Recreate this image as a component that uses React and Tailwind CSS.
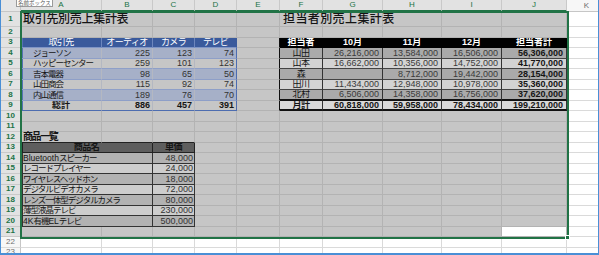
import React from "react";

const COLS = ["A", "B", "C", "D", "E", "F", "G", "H", "I", "J", "K"];
const WIDTH = {
  A: "w-[81px]",
  B: "w-[51px]",
  C: "w-[42px]",
  D: "w-[42px]",
  E: "w-[43px]",
  F: "w-[43px]",
  G: "w-[60px]",
  H: "w-[59px]",
  I: "w-[60px]",
  J: "w-[65px]",
  K: "w-[40px]",
};
const ROWS = Array.from({ length: 23 }, (_, i) => i + 1);

const sheet = {};
const put = (ref, cell) => {
  sheet[ref] = { ...sheet[ref], ...cell };
};

// titles
put("A1", { t: "取引先別売上集計表", title: true, x: "text-[12px] font-medium pl-[2px]", jp: "tracking-[-0.3px]" });
put("F1", { t: "担当者別売上集計表", title: true, x: "text-[12px] font-medium pl-[3px]", jp: "tracking-[0.4px]" });
put("A12", { t: "商品一覧", title: true, x: "text-[10px] font-bold pl-[2px]", jp: "tracking-[-1.4px]", c: "bg-[#c6c6c6] border-r-[#b3b3b3] border-b-[#222]" });
put("B12", { c: "bg-[#c6c6c6] border-r-[#b3b3b3] border-b-[#222]" });
put("C12", { c: "bg-[#c6c6c6] border-r-[#b3b3b3] border-b-[#222]" });

// 取引先別
const t1Head = ["取引先", "オーディオ", "カメラ", "テレビ"];
const T1 = ["A", "B", "C", "D"];
T1.forEach((col, i) =>
  put(col + "3", {
    t: t1Head[i],
    c: `bg-[#3a5a9c] border-b-[#7f95c6] ${col === "D" ? "border-r-[#3a5a9c]" : "border-r-[#6d86bd]"} ${col === "A" ? "shadow-[inset_2px_0_0_#5472b2]" : ""}`,
    x: "justify-center text-white text-[9px]",
    jp: "tracking-[-0.6px]",
  })
);
const t1 = [
  ["ジョーソン", 225, 123, 74],
  ["ハッピーセンター", 259, 101, 123],
  ["吉本電器", 98, 65, 50],
  ["山田商会", 115, 92, 74],
  ["内山通信", 189, 76, 70],
  ["総計", 886, 457, 391],
];
t1.forEach((row, i) => {
  const r = i + 4;
  const band = i % 2 === 0;
  const total = r === 9;
  T1.forEach((col, j) =>
    put(col + r, {
      t: row[j],
      c: `${band ? "bg-[#a6b0c8]" : "bg-[#c6c6c6]"} ${total ? "border-b-[#4d6db0]" : "border-b-[#8e9fc8]"} ${col === "D" ? "border-r-[#4d6db0]" : "border-r-[#b4b8c2]"} ${col === "A" ? "shadow-[inset_2px_0_0_#5472b2]" : ""}`,
      x: total
        ? j === 0
          ? "justify-center font-bold text-[9px]"
          : "justify-end pr-[2px] font-bold text-[9px]"
        : j === 0
        ? "pl-[12px] text-[8.5px]"
        : "justify-end pr-[2px] text-[9px] text-[#333]",
      jp: total ? "tracking-[0px]" : "tracking-[-1px]",
    })
  );
});

// 担当者別
const T2 = ["F", "G", "H", "I", "J"];
const t2Head = ["担当者", "10月", "11月", "12月", "担当者計"];
T2.forEach((col, i) =>
  put(col + "3", {
    t: t2Head[i],
    c: "bg-black border-r-black border-b-black",
    x: "justify-center text-white font-bold text-[9px]",
    jp: "tracking-[0px]",
  })
);
for (let r = 3; r <= 9; r++) put("E" + r, { c: "bg-[#c6c6c6] border-r-[#111] border-b-[#b3b3b3]" });
const t2 = [
  ["山田", "26,216,000", "13,584,000", "16,506,000", "56,306,000"],
  ["山本", "16,662,000", "10,356,000", "14,752,000", "41,770,000"],
  ["森", "", "8,712,000", "19,442,000", "28,154,000"],
  ["田川", "11,434,000", "12,948,000", "10,978,000", "35,360,000"],
  ["北村", "6,506,000", "14,358,000", "16,756,000", "37,620,000"],
  ["月計", "60,818,000", "59,958,000", "78,434,000", "199,210,000"],
];
t2.forEach((row, i) => {
  const r = i + 4;
  const total = r === 9;
  const dark = i % 2 === 0;
  T2.forEach((col, j) =>
    put(col + r, {
      t: row[j],
      bw: r >= 8 ? "border-r border-b-2" : "border-r border-b",
      c: `${total ? "bg-[#d8d8d8]" : dark ? "bg-[#aaaaaa]" : "bg-[#d3d3d3]"} border-r-[#333] ${r >= 8 ? "border-b-[#111]" : "border-b-[#444]"}`,
      x: total
        ? j === 0
          ? "justify-center font-bold text-[9px]"
          : "justify-end pr-[3px] font-bold text-[9px]"
        : j === 0
        ? "justify-center text-[9px]"
        : j === 4
        ? "justify-end pr-[3px] font-bold text-[9px]"
        : "justify-end pr-[3px] text-[9px] text-[#3a3a3a]",
      jp: "tracking-[-0.5px]",
    })
  );
});

// 商品一覧
put("A13", {
  t: "商品名",
  span: 2,
  c: "bg-[#5e5e5e] border-r-[#222] border-b-[#222] shadow-[inset_2px_0_0_#222]",
  x: "justify-center font-bold text-[9px]",
  jp: "tracking-[-0.5px]",
});
put("C13", { t: "単価", c: "bg-[#5e5e5e] border-r-[#222] border-b-[#222]", x: "justify-center font-bold text-[9px]", jp: "tracking-[-0.5px]" });
const products = [
  ["Bluetoothスピーカー", "48,000"],
  ["レコードプレイヤー", "24,000"],
  ["ワイヤレスヘッドホン", "18,000"],
  ["デジタルビデオカメラ", "72,000"],
  ["レンズ一体型デジタルカメラ", "80,000"],
  ["薄型液晶テレビ", "230,000"],
  ["4K有機ELテレビ", "500,000"],
];
products.forEach(([name, price], i) => {
  const r = i + 14;
  const dark = i % 2 === 0;
  put("A" + r, {
    t: name,
    span: 2,
    c: `${dark ? "bg-[#b2b2b2]" : "bg-[#cdcdcd]"} border-r-[#333] border-b-[#333] shadow-[inset_2px_0_0_#333]`,
    x: "pl-[2px] text-[8.5px]",
    jp: "tracking-[-1px]",
  });
  put("C" + r, {
    t: price,
    c: `${dark ? "bg-[#b2b2b2]" : "bg-[#cdcdcd]"} border-r-[#333] border-b-[#333]`,
    x: "justify-end pr-[1px] text-[9px] text-[#333]",
  });
});

put("J21", { c: "bg-white border-r-[#b3b3b3] border-b-[#b3b3b3]" });

function Txt({ t, jp }) {
  const parts = String(t).split(/([\u3000-\u9fff\uff00-\uffef]+)/);
  return parts.map((p, i) =>
    /[\u3000-\u9fff\uff00-\uffef]/.test(p) ? (
      <span key={i} className={jp || "tracking-[-1px]"}>
        {p}
      </span>
    ) : (
      p
    )
  );
}

function Cell({ r, col }) {
  const cell = sheet[col + r] || {};
  const sel = r <= 21 && col !== "K";
  const c =
    cell.c ||
    (sel
      ? "bg-[#c6c6c6] border-r-[#b3b3b3] border-b-[#b3b3b3]"
      : "bg-white border-r-[#dadada] border-b-[#dadada]");
  const w = cell.span === 2 ? "w-[132px]" : WIDTH[col];
  return (
    <div
      className={`${w} shrink-0 h-full flex items-center whitespace-nowrap leading-[10px] ${
        cell.title ? "overflow-visible" : "overflow-hidden"
      } ${cell.bw || "border-r border-b"} ${c} ${cell.x || "text-[9px]"}`}
    >
      {cell.t !== undefined && cell.t !== "" && (
        <span className={cell.title ? "relative z-10" : ""}>
          <Txt t={cell.t} jp={cell.jp} />
        </span>
      )}
    </div>
  );
}

function Row({ r }) {
  const sel = r <= 21;
  const skipB = sheet["A" + r]?.span === 2;
  return (
    <div className={`flex shrink-0 ${r === 1 ? "h-[15px]" : "h-[10.5px]"}`}>
      <div
        className={`w-[20px] shrink-0 h-full flex items-center justify-center text-[8px] border-r border-b ${
          sel
            ? "bg-[#e2e2e2] border-r-[#217346] border-b-[#c9c9c9] text-[#217346] font-bold"
            : "bg-[#f7f7f7] border-r-[#c6c6c6] border-b-[#dadada] text-[#707070]"
        }`}
      >
        {r}
      </div>
      {COLS.filter((col) => !(skipB && col === "B")).map((col) => (
        <Cell key={col} r={r} col={col} />
      ))}
    </div>
  );
}

export default function App() {
  return (
    <div className="w-[599px] h-[255px] overflow-hidden bg-white">
      <div className="relative h-full overflow-hidden border-l border-r border-b-2 border-[#4a8fd6] font-['Liberation_Sans','Noto_Sans_CJK_JP',sans-serif] text-[#151515]">
        {/* column headers */}
        <div className="flex h-[12px]">
          <div className="w-[20px] shrink-0 h-full bg-[#e6e6e6] border-r border-b border-[#c6c6c6]" />
          {COLS.map((col) => (
            <div
              key={col}
              className={`${WIDTH[col]} shrink-0 h-full flex items-center justify-center text-[8px] ${
                col === "K"
                  ? "bg-[#f7f7f7] border-r border-b border-r-[#dadada] border-b-[#c6c6c6] text-[#707070]"
                  : "bg-[#e2e2e2] border-r border-b-2 border-r-[#c9c9c9] border-b-[#217346] text-[#217346]"
              }`}
            >
              {col}
            </div>
          ))}
        </div>

        {ROWS.map((r) => (
          <Row key={r} r={r} />
        ))}

        {/* selection A1:J21 */}
        <div className="absolute left-[19px] top-[11px] w-[549px] h-[228px] border-2 border-[#217346] pointer-events-none z-20" />
        <div className="absolute left-[564px] top-[235px] w-[5px] h-[5px] bg-[#217346] border border-white z-30" />

        {/* name box tooltip */}
        <div className="absolute left-[15px] top-0 h-[7px] px-[1px] flex items-center bg-white border border-t-0 border-[#9a9a9a] text-[5.5px] leading-[6px] text-[#555] z-30">
          名前ボックス
        </div>
      </div>
    </div>
  );
}
